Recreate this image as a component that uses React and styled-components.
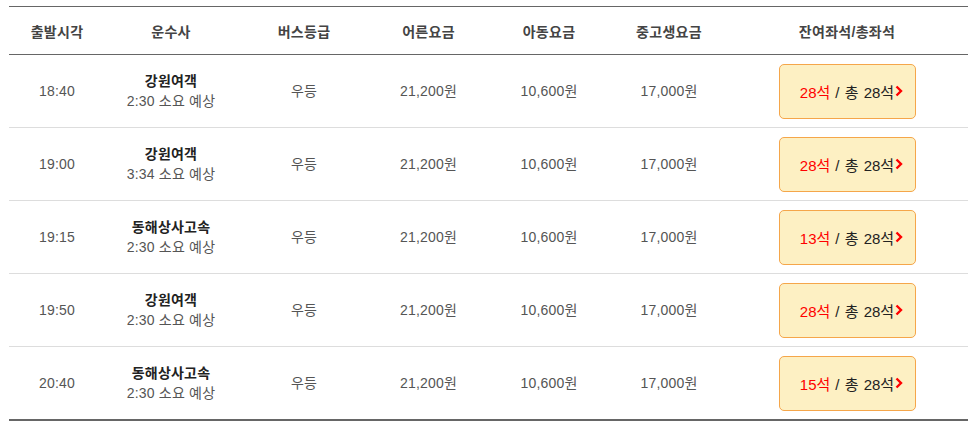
import React from "react";
import styled, { createGlobalStyle } from "styled-components";

const GlobalStyle = createGlobalStyle`
  body {
    margin: 0;
    padding: 6px 8px 0 9px;
    background: #fff;
    font-family: "Liberation Sans", "Noto Sans CJK KR", sans-serif;
  }
`;

const Table = styled.div`
  width: 959px;
  border-top: 1px solid #666;
  border-bottom: 2px solid #666;
`;

const columns = "96px 132px 134px 115px 126px 114px 242px";

const HeaderRow = styled.div`
  display: grid;
  grid-template-columns: ${columns};
  height: 47px;
  border-bottom: 1px solid #666;
`;

const HeadCell = styled.div`
  display: flex;
  align-items: center;
  justify-content: center;
  font-size: 14px;
  font-weight: bold;
  color: #444;
  letter-spacing: 0.3px;
`;

const Row = styled.div`
  display: grid;
  grid-template-columns: ${columns};
  height: 72px;
  border-top: ${(p) => (p.$first ? "none" : "1px solid #ddd")};
`;

const Cell = styled.div`
  display: flex;
  flex-direction: column;
  align-items: center;
  justify-content: center;
  font-size: 14px;
  color: #555;
  line-height: 20px;
  letter-spacing: 0.2px;
`;

const Company = styled.span`
  font-weight: bold;
  color: #222;
`;

const SeatButton = styled.button`
  width: 137px;
  height: 55px;
  background: #fdf0c3;
  border: 1px solid #f5a64a;
  border-radius: 5px;
  font-family: inherit;
  font-size: 15px;
  color: #222;
  display: flex;
  align-items: center;
  justify-content: center;
  padding: 0 0 0 9px;
  cursor: pointer;
`;

const Remain = styled.span`
  color: #f00;
  margin-right: 5px;
`;

const Total = styled.span`
  word-spacing: 1px;
`;

const Chevron = styled.svg`
  width: 8px;
  height: 12px;
  margin-left: 1px;
`;

const headers = ["출발시각", "운수사", "버스등급", "어른요금", "아동요금", "중고생요금", "잔여좌석/총좌석"];

const rows = [
  { time: "18:40", company: "강원여객", dur: "2:30 소요 예상", remain: 28 },
  { time: "19:00", company: "강원여객", dur: "3:34 소요 예상", remain: 28 },
  { time: "19:15", company: "동해상사고속", dur: "2:30 소요 예상", remain: 13 },
  { time: "19:50", company: "강원여객", dur: "2:30 소요 예상", remain: 28 },
  { time: "20:40", company: "동해상사고속", dur: "2:30 소요 예상", remain: 15 },
];

export default function App() {
  return (
    <>
      <GlobalStyle />
      <Table>
        <HeaderRow>
          {headers.map((h) => (
            <HeadCell key={h}>{h}</HeadCell>
          ))}
        </HeaderRow>
        {rows.map((r, i) => (
          <Row key={i} $first={i === 0}>
            <Cell>{r.time}</Cell>
            <Cell>
              <Company>{r.company}</Company>
              <span>{r.dur}</span>
            </Cell>
            <Cell>우등</Cell>
            <Cell>21,200원</Cell>
            <Cell>10,600원</Cell>
            <Cell>17,000원</Cell>
            <Cell>
              <SeatButton>
                <Remain>{r.remain}석</Remain>
                <Total>/ 총 28석</Total>
                <Chevron viewBox="0 0 8 12">
                  <path d="M1.5 1.5 L6 6 L1.5 10.5" fill="none" stroke="#f00" strokeWidth="2.4" />
                </Chevron>
              </SeatButton>
            </Cell>
          </Row>
        ))}
      </Table>
    </>
  );
}
